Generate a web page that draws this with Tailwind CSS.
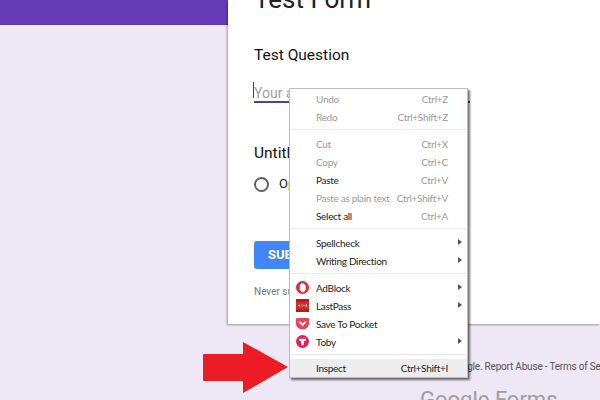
<!DOCTYPE html>
<html lang="en">
    <head>
        <meta charset="UTF-8" />
        <title>Test Form</title>
        <script src="https://cdn.jsdelivr.net/npm/@tailwindcss/browser@4"></script>
    </head>
    <body class="relative w-[600px] h-[400px] overflow-hidden bg-[#ede7f6] font-['Roboto',sans-serif]">
        <!-- form page -->
        <div class="h-[25px] bg-[#673ab7] border-b border-[#5e35b1]"></div>
        <div class="relative flow-root -mt-[25px] ml-[228px] h-[324px] overflow-hidden bg-white pl-[26px] shadow-[-1px_1px_2px_rgba(0,0,0,0.35)]">
            <h1 class="-mt-[21px] text-[26px] leading-[40px] text-[#202124] whitespace-nowrap">Test Form</h1>
            <p class="mt-[24px] text-[15.5px] leading-[24px] text-[#111]">Test Question</p>
            <div class="relative mt-[15px] w-[216px] h-[21px] pt-px border-b-2 border-[#5e35b1] text-[14px] leading-[20px] text-[#9e9e9e]">
                <span class="absolute -left-px top-0 w-px h-[16px] bg-[#444]"></span>
                Your answer
            </div>
            <p class="mt-[38px] text-[15.5px] leading-[24px] text-[#111]">Untitled Question</p>
            <div class="mt-[9px] flex items-center gap-[10px]">
                <span class="w-[15px] h-[15px] rounded-full border-2 border-[#616161]"></span>
                <span class="text-[13px] leading-[20px] text-[#212121]">Option 1</span>
            </div>
            <button class="mt-[47px] block w-[90px] h-[28px] rounded-[3px] bg-[#4285f4] text-left pl-[14px] text-[13px] font-bold text-white">SUBMIT</button>
            <p class="mt-[15px] text-[10px] leading-[16px] text-[#777] whitespace-nowrap">Never submit passwords through Google Forms.</p>
        </div>
        <div class="ml-[289px] overflow-hidden">
            <p class="mt-[35px] -ml-[41px] text-[10px] tracking-[-0.2px] leading-[16px] text-[#555] whitespace-nowrap">This content is neither created nor endorsed by Google. Report Abuse - Terms of Service</p>
            <p class="mt-[12px] ml-[131px] text-[22px] leading-[26px] text-[#9e9e9e] whitespace-nowrap">Google Forms</p>
        </div>

        <!-- context menu -->
        <div class="absolute left-[289px] top-[88px] w-[179px] h-[290px] bg-white border border-[#bdbdbd] pt-px shadow-[2px_2px_2px_rgba(0,0,0,0.55)] font-['Lato',sans-serif] text-[10px] tracking-[-0.3px] text-[#222] whitespace-nowrap">
            <div class="flex h-[18px] items-center justify-between pl-[26px] pr-[19px] text-[#9a9a9a]"><span>Undo</span><span>Ctrl+Z</span></div>
            <div class="flex h-[18px] items-center justify-between pl-[26px] pr-[19px] text-[#9a9a9a]"><span>Redo</span><span>Ctrl+Shift+Z</span></div>
            <div class="mt-[3px] mb-[5px] h-px bg-[#e9e9e9]"></div>
            <div class="flex h-[18px] items-center justify-between pl-[26px] pr-[19px] text-[#9a9a9a]"><span>Cut</span><span>Ctrl+X</span></div>
            <div class="flex h-[18px] items-center justify-between pl-[26px] pr-[19px] text-[#9a9a9a]"><span>Copy</span><span>Ctrl+C</span></div>
            <div class="flex h-[18px] items-center justify-between pl-[26px] pr-[19px]"><span>Paste</span><span class="text-[#9a9a9a]">Ctrl+V</span></div>
            <div class="flex h-[18px] items-center justify-between pl-[26px] pr-[19px] text-[#9a9a9a]"><span>Paste as plain text</span><span>Ctrl+Shift+V</span></div>
            <div class="flex h-[18px] items-center justify-between pl-[26px] pr-[19px]"><span>Select all</span><span class="text-[#9a9a9a]">Ctrl+A</span></div>
            <div class="mt-[3px] mb-[5px] h-px bg-[#e9e9e9]"></div>
            <div class="relative flex h-[18px] items-center pl-[26px]"><span>Spellcheck</span><span class="absolute right-[5px] top-[5px] border-y-[3.5px] border-l-[4px] border-y-transparent border-l-[#555]"></span></div>
            <div class="relative flex h-[18px] items-center pl-[26px]"><span>Writing Direction</span><span class="absolute right-[5px] top-[5px] border-y-[3.5px] border-l-[4px] border-y-transparent border-l-[#555]"></span></div>
            <div class="mt-[3px] mb-[5px] h-px bg-[#e9e9e9]"></div>
            <div class="relative flex h-[18px] items-center pl-[26px]">
                <svg class="absolute left-[6px] top-[2px]" width="13" height="13" viewBox="0 0 14 14"><circle cx="7" cy="7" r="7" fill="#e8262b"/><path d="M4 5 L5.5 2.5 L8.5 2.5 L10.5 5 L10.5 9 L8.5 12 L6 12 L4 9 Z" fill="#fff"/></svg>
                <span>AdBlock</span><span class="absolute right-[5px] top-[5px] border-y-[3.5px] border-l-[4px] border-y-transparent border-l-[#555]"></span>
            </div>
            <div class="relative flex h-[18px] items-center pl-[26px]">
                <svg class="absolute left-[6px] top-[2px]" width="13" height="13" viewBox="0 0 14 14"><rect width="14" height="14" rx="1" fill="#d32d27"/><rect y="0" width="14" height="3" fill="#b71c1c"/><rect y="11" width="14" height="3" fill="#b71c1c"/><circle cx="3.5" cy="7" r="0.9" fill="#fff"/><circle cx="6" cy="7" r="0.9" fill="#fff"/><circle cx="8.5" cy="7" r="0.9" fill="#fff"/><rect x="10.5" y="5.5" width="1" height="3" fill="#fff"/></svg>
                <span>LastPass</span><span class="absolute right-[5px] top-[5px] border-y-[3.5px] border-l-[4px] border-y-transparent border-l-[#555]"></span>
            </div>
            <div class="relative flex h-[18px] items-center pl-[26px]">
                <svg class="absolute left-[6px] top-[2px]" width="13" height="13" viewBox="0 0 14 14"><path d="M1.5 1 H12.5 Q14 1 14 2.5 V7 A7 6.5 0 0 1 0 7 V2.5 Q0 1 1.5 1 Z" fill="#ef4056"/><path d="M4 5.5 L7 8.5 L10 5.5" fill="none" stroke="#fff" stroke-width="2" stroke-linecap="round"/></svg>
                <span>Save To Pocket</span>
            </div>
            <div class="relative flex h-[18px] items-center pl-[26px]">
                <svg class="absolute left-[6px] top-[2px]" width="13" height="13" viewBox="0 0 14 14"><circle cx="7" cy="7" r="7" fill="#e91e53"/><path d="M3.5 4 H10.5 V6.5 H8.5 V11 H5.5 V6.5 H3.5 Z" fill="#fff"/></svg>
                <span>Toby</span><span class="absolute right-[5px] top-[5px] border-y-[3.5px] border-l-[4px] border-y-transparent border-l-[#555]"></span>
            </div>
            <div class="mt-[3px] mb-[4px] h-px bg-[#e9e9e9]"></div>
            <div class="flex h-[18px] items-center justify-between bg-[#ededed] pl-[26px] pr-[19px]"><span>Inspect</span><span>Ctrl+Shift+I</span></div>
        </div>

        <!-- red arrow -->
        <svg class="absolute left-[203px] top-[342px]" width="86" height="52" viewBox="0 0 86 52"><path d="M1 12 H40 V0 L85 25 L40 51 V39 H1 Q0 39 0 38 V13 Q0 12 1 12 Z" fill="#ed1c24"/></svg>
    </body>
</html>
